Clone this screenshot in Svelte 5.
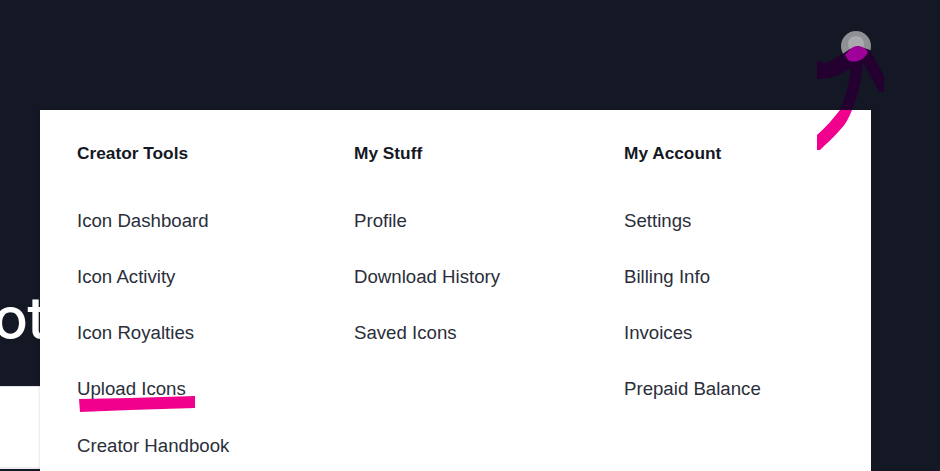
<script>
  const columns = [
    { title: 'Creator Tools', width: 277, links: ['Icon Dashboard', 'Icon Activity', 'Icon Royalties', 'Upload Icons', 'Creator Handbook'] },
    { title: 'My Stuff', width: 270, links: ['Profile', 'Download History', 'Saved Icons'] },
    { title: 'My Account', width: 210, links: ['Settings', 'Billing Info', 'Invoices', 'Prepaid Balance'] },
  ];
</script>

<div class="page">
  <section class="hero">
    <header class="topbar">
      <div class="avatar"><span class="avatar__head"></span></div>
    </header>
    <h1 class="hero__title">Photo</h1>
  </section>
  <section class="below"></section>

  <nav class="menu">
    {#each columns as col}
      <div class="menu__col" style="width:{col.width}px">
        <h3 class="menu__title">{col.title}</h3>
        <ul class="menu__list">
          {#each col.links as link}
            <li>{link}</li>
          {/each}
        </ul>
      </div>
    {/each}
  </nav>

  <!-- hand drawn annotations on top of the screenshot -->
  <svg class="marks" width="940" height="471" viewBox="0 0 940 471" aria-hidden="true">
    <path d="M817 61 L826 63 L838 57 L850 49 L858 46 L870 50 L884 76 L884 92 L879 92 L863 62 C862 78 859 94 852 110 L840 110 C845 98 849 84 851 68 C843 73 836 77 828 78 L817 79 Z" fill="#23002f" />
    <path d="M840 110 L852 110 C849 118 845 125 840 130 C834 137 826 144 820 150 L817 150 L817 135 C826 127 833 119 840 110 Z" fill="#f0008c" />
    <path d="M845 55 C849 50 853 46 857 46 C862 46 866 49 868 52 C866 56 863 59 860 60 C856 62 851 62 848 60 C847 58 846 57 845 55 Z" fill="#a0009a" />
    <path d="M79 399 L130 398 L195 396 L195 408 L130 410 L80 412 Z" fill="#f0008c" />
  </svg>
</div>

<style>
  :global(body) {
    margin: 0;
    background: #141824;
  }

  .page {
    position: relative;
    width: 940px;
    height: 471px;
    overflow: hidden;
    font-family: "Liberation Sans", Arial, sans-serif;
  }

  .hero {
    height: 386px;
    overflow: hidden;
  }

  .topbar {
    display: flex;
    justify-content: flex-end;
    padding: 31px 69px 0 0;
  }

  .avatar {
    width: 30px;
    height: 30px;
    border-radius: 50%;
    background: #8f9094;
    display: flex;
    justify-content: center;
    overflow: hidden;
  }
  .avatar__head {
    width: 16px;
    height: 16px;
    margin-top: 5px;
    border-radius: 50%;
    background: #a9aaad;
  }

  .hero__title {
    margin: 224px 0 0 -77px;
    font-family: Inter, "Liberation Sans", sans-serif;
    font-size: 58px;
    line-height: 66px;
    font-weight: 500;
    letter-spacing: -1px;
    color: #fff;
  }

  .below {
    width: 500px;
    height: 83px;
    background: #fff;
    box-sizing: border-box;
    border-top: 1px solid #e4e5e8;
    border-bottom: 2px solid #eceded;
  }

  .menu {
    position: absolute;
    left: 40px;
    top: 110px;
    width: 831px;
    height: 361px;
    box-sizing: border-box;
    padding: 32px 0 0 37px;
    display: flex;
    background: #fff;
    box-shadow: 0 0 3px rgba(20, 24, 36, 0.18);
  }

  .menu__title {
    margin: 0 0 43.5px;
    font-size: 17.3px;
    line-height: 22px;
    font-weight: 700;
    color: #141824;
  }

  .menu__list {
    list-style: none;
    margin: 0;
    padding: 0;
    display: flex;
    flex-direction: column;
    gap: 30px;
  }
  .menu__list li {
    font-size: 18.65px;
    line-height: 26.3px;
    color: #2a2e3a;
    white-space: nowrap;
  }

  .marks {
    position: absolute;
    left: 0;
    top: 0;
    pointer-events: none;
  }
</style>
